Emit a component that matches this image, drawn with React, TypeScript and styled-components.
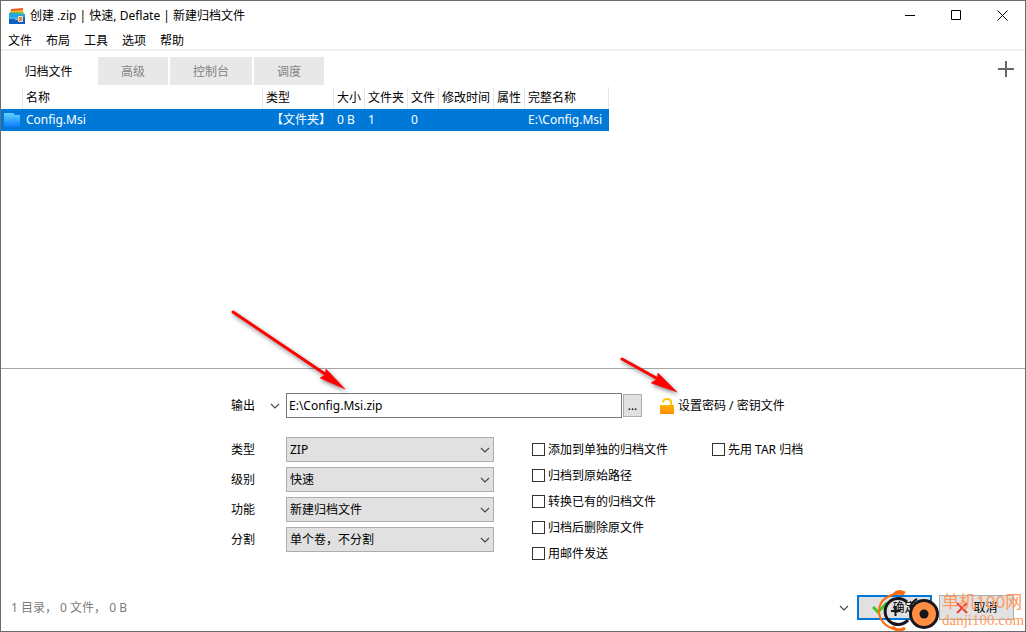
import React from 'react';
import styled, { createGlobalStyle } from 'styled-components';

const GlobalStyle = createGlobalStyle`
  * { box-sizing: border-box; }
  body { margin: 0; background: #fff; }
  body, button, input, select {
    font-family: "Noto Sans", "Noto Sans CJK SC", sans-serif;
    font-size: 12px;
    line-height: 18px;
    color: #000;
  }
`;

const Window = styled.div`
  position: relative;
  display: flex;
  flex-direction: column;
  min-height: 100vh;
  border: 1px solid #6b6b6b;
  background: #fff;
  overflow: hidden;
`;

const TitleBar = styled.header`
  display: flex;
  align-items: center;
  height: 29px;
  padding-left: 8px;
  gap: 5px;
`;

const Title = styled.h1`
  flex: 1;
  margin: 0;
  font-size: 12px;
  font-weight: 400;
`;

const Captions = styled.div`
  display: flex;
`;

const Caption = styled.button`
  display: flex;
  align-items: center;
  justify-content: center;
  width: 46px;
  height: 29px;
  padding: 0;
  border: 0;
  background: none;
`;

const MenuBar = styled.nav`
  display: flex;
  height: 21px;
  padding: 2px 7px 0;
  gap: 14px;
  border-bottom: 2px solid #f0f0f0;
`;

const MenuItem = styled.button`
  padding: 0;
  border: 0;
  background: none;
`;

const TabBar = styled.div`
  display: flex;
  align-items: flex-start;
  gap: 2px;
  padding: 6px 7px 2px 0;
`;

const Tab = styled.button<{ $width: number; $active?: boolean }>`
  width: ${p => p.$width}px;
  height: 28px;
  padding: 2px 0 0;
  border: 0;
  background: ${p => (p.$active ? '#fff' : '#e8e8e8')};
  color: ${p => (p.$active ? '#000' : '#838383')};
`;

const AddButton = styled.button`
  display: flex;
  margin-left: auto;
  padding: 4px;
  border: 0;
  background: none;
`;

const FileArea = styled.main`
  flex: 1;
  border-bottom: 1px solid #a5a5a5;
`;

const FileTable = styled.table`
  width: 608px;
  table-layout: fixed;
  border-collapse: separate;
  border-spacing: 0;
`;

const HeadCell = styled.th`
  height: 22px;
  padding: 0 0 0 3px;
  border-right: 1px solid #e5e5e5;
  font-weight: 400;
  text-align: left;
  white-space: nowrap;
`;

const Cell = styled.td<{ $align?: 'right' }>`
  height: 22px;
  padding: 0 3px;
  background: #0078d7;
  color: #fff;
  text-align: ${p => p.$align ?? 'left'};
  white-space: nowrap;

  svg { display: block; }
`;

const Form = styled.form`
  position: relative;
  display: flex;
  flex-direction: column;
  gap: 19px;
  padding: 24px 8px 29px 230px;
`;

const OutputRow = styled.div`
  display: flex;
  align-items: center;
  height: 25px;
`;

const OutputLabel = styled.label`
  width: 35px;
`;

const ArrowButton = styled.button`
  display: flex;
  align-items: center;
  justify-content: center;
  width: 18px;
  height: 24px;
  padding: 0;
  border: 0;
  background: none;
`;

const PathInput = styled.input`
  width: 336px;
  height: 25px;
  margin-left: 2px;
  padding: 0 2px;
  border: 1px solid #7a7a7a;
  background: #fff;
`;

const BrowseButton = styled.button`
  width: 19px;
  height: 23px;
  margin-left: 1px;
  padding: 0;
  border: 1px solid #adadad;
  background: #e1e1e1;
`;

const PasswordLink = styled.button`
  display: flex;
  align-items: center;
  gap: 4px;
  margin-left: 18px;
  padding: 0;
  border: 0;
  background: none;
`;

const Options = styled.div`
  display: flex;
  align-items: flex-start;
`;

const Fields = styled.div`
  display: grid;
  grid-template-columns: 55px 208px;
  align-items: center;
  row-gap: 5px;
  margin-right: 38px;
`;

const SelectBox = styled.div`
  display: grid;
  align-items: center;

  > * { grid-area: 1 / 1; }
  svg { justify-self: end; margin-right: 4px; pointer-events: none; }
`;

const Select = styled.select`
  appearance: none;
  width: 100%;
  height: 25px;
  padding: 0 20px 0 3px;
  border: 1px solid #adadad;
  border-radius: 0;
  background: #e1e1e1;
`;

const Checks = styled.div`
  display: flex;
  flex-direction: column;
  gap: 1px;
  width: 180px;
`;

const CheckLabel = styled.label`
  display: flex;
  align-items: center;
  gap: 3px;
  height: 25px;
  white-space: nowrap;
`;

const CheckInput = styled.input`
  appearance: none;
  width: 13px;
  height: 13px;
  margin: 0;
  border: 1px solid #333;
  background: #fff;

  &:checked { background: #0078d7; }
`;

const Footer = styled.footer`
  display: flex;
  align-items: center;
  padding: 0 11px 11px 10px;
`;

const Status = styled.span`
  flex: 1;
  color: #7b7b7b;
`;

const ActionButton = styled.button<{ $primary?: boolean }>`
  display: flex;
  align-items: center;
  justify-content: center;
  gap: 4px;
  width: 75px;
  height: 25px;
  margin-left: ${p => (p.$primary ? 4 : 7)}px;
  padding: 0;
  border: ${p => (p.$primary ? '2px solid #0078d7' : '1px solid #adadad')};
  background: #e1e1e1;
`;

const Arrows = styled.svg`
  position: absolute;
  left: 220px;
  top: -70px;
  pointer-events: none;
  filter: drop-shadow(1px 2px 2px rgba(0, 0, 0, 0.5));
`;

const Watermark = styled.div`
  position: absolute;
  right: 0;
  bottom: -1px;
  display: flex;
  align-items: center;
  color: #ff9a5c;
  pointer-events: none;
`;

const SiteText = styled.div`
  display: flex;
  flex-direction: column;
  width: 83px;
  margin-left: 2px;
  white-space: nowrap;
`;

const SiteName = styled.span`
  font-size: 17px;
  line-height: 18px;
`;

const SiteDomain = styled.span`
  font-family: "Liberation Serif", serif;
  font-size: 15px;
  line-height: 18px;
`;

const Chevron = () => (
  <svg width="10" height="6" viewBox="0 0 10 6" fill="none" stroke="#444" strokeWidth="1.1">
    <path d="M1 1l4 4 4-4" />
  </svg>
);

const AppIcon = () => (
  <svg width="16" height="16" viewBox="0 0 16 16">
    <path d="M2 1l12-1v5H2z" fill="#ee5a24" />
    <path d="M1 3l13-1v4H1z" fill="#f8b52a" />
    <path d="M1 4h13l1 1v3H1z" fill="#7cc24a" />
    <path d="M0 5h9l1 1h6v4H0z" fill="#27a6df" />
    <path d="M0 9h16v7H0z" fill="#0d5fc4" />
    <path d="M0 9h9v2H0z" fill="#35b5ed" />
    <path d="M9.500 8.500h4v5h-4z" fill="#c98a58" stroke="#ffe0bd" />
    <path d="M6 11h5v1H6z" fill="#f0a866" />
  </svg>
);

const FolderIcon = () => (
  <svg width="16" height="14" viewBox="0 0 16 14">
    <defs>
      <linearGradient id="folder" x1="0" y1="0" x2="0" y2="1">
        <stop offset="0" stopColor="#62d3ff" />
        <stop offset="1" stopColor="#0a7cff" />
      </linearGradient>
    </defs>
    <path d="M0 0h9l2 2h5v12H0z" fill="url(#folder)" />
  </svg>
);

const LockIcon = () => (
  <svg width="14" height="16" viewBox="0 0 14 16">
    <defs>
      <linearGradient id="lock" x1="0" y1="0" x2="0" y2="1">
        <stop offset="0" stopColor="#ffb400" />
        <stop offset="1" stopColor="#ff8c00" />
      </linearGradient>
    </defs>
    <path d="M3 4.500C3 2 4.800 1 7 1s4.200 1.200 4.200 4v2" fill="none" stroke="#ffc400" strokeWidth="1.800" />
    <path d="M0 7h14v9H0z" fill="url(#lock)" />
  </svg>
);

const SiteLogo = () => (
  <svg width="62" height="42" viewBox="0 0 62 42" fill="none">
    <path d="M26 4C12 2 1 10 1 21c0 9 7 17 17 18" stroke="#ff6a0c" strokeWidth="2" />
    <path d="M16 4c3-3 7-3 11-1M14 37c5 4 9 4 13 1" stroke="#ff6a0c" strokeWidth="3" />
    <path d="M29 12A13 13 0 1 0 30 30" stroke="#16161c" strokeWidth="3" />
    <path d="M13 21h9M17.500 16v10" stroke="#16161c" strokeWidth="2" />
    <circle cx="46" cy="24" r="13.500" fill="#ff8d42" stroke="#16161c" strokeWidth="3" />
    <circle cx="46" cy="24" r="4.500" fill="#16161c" />
    <path d="M32 18c1-4 3-7 7-9" stroke="#16161c" strokeWidth="2" />
  </svg>
);

const columns: [string, number][] = [
  ['', 22], ['名称', 240], ['类型', 71], ['大小', 31], ['文件夹', 43],
  ['文件', 31], ['修改时间', 55], ['属性', 31], ['完整名称', 84],
];

const fields = [
  { id: 'type', label: '类型', value: 'ZIP' },
  { id: 'level', label: '级别', value: '快速' },
  { id: 'function', label: '功能', value: '新建归档文件' },
  { id: 'split', label: '分割', value: '单个卷，不分割' },
];

const checks = ['添加到单独的归档文件', '归档到原始路径', '转换已有的归档文件', '归档后删除原文件', '用邮件发送'];

const Check = ({ label }: { label: string }) => (
  <CheckLabel>
    <CheckInput type="checkbox" />
    {label}
  </CheckLabel>
);

export default function App() {
  return (
    <>
      <GlobalStyle />
      <Window>
        <TitleBar>
          <AppIcon />
          <Title>创建 .zip | 快速, Deflate | 新建归档文件</Title>
          <Captions>
            <Caption aria-label="最小化">
              <svg width="11" height="11" stroke="#000"><path d="M0 5.500h10" /></svg>
            </Caption>
            <Caption aria-label="最大化">
              <svg width="11" height="11" fill="none" stroke="#000"><path d="M.5.5h9v9h-9z" /></svg>
            </Caption>
            <Caption aria-label="关闭">
              <svg width="11" height="11" stroke="#000"><path d="M.5.5l10 10M10.500.5l-10 10" /></svg>
            </Caption>
          </Captions>
        </TitleBar>
        <MenuBar>
          {['文件', '布局', '工具', '选项', '帮助'].map(m => <MenuItem key={m}>{m}</MenuItem>)}
        </MenuBar>
        <TabBar>
          <Tab $width={95} $active>归档文件</Tab>
          <Tab $width={70}>高级</Tab>
          <Tab $width={82}>控制台</Tab>
          <Tab $width={70}>调度</Tab>
          <AddButton aria-label="添加">
            <svg width="16" height="16" stroke="#666" strokeWidth="2"><path d="M0 8h16M8 0v16" /></svg>
          </AddButton>
        </TabBar>
        <FileArea>
          <FileTable>
            <colgroup>
              {columns.map(([name, width]) => <col key={name} width={width} />)}
            </colgroup>
            <thead>
              <tr>{columns.map(([name]) => <HeadCell key={name}>{name}</HeadCell>)}</tr>
            </thead>
            <tbody>
              <tr>
                <Cell><FolderIcon /></Cell>
                <Cell>Config.Msi</Cell>
                <Cell $align="right">【文件夹】</Cell>
                <Cell>0 B</Cell>
                <Cell>1</Cell>
                <Cell>0</Cell>
                <Cell />
                <Cell />
                <Cell>E:\Config.Msi</Cell>
              </tr>
            </tbody>
          </FileTable>
        </FileArea>
        <Form onSubmit={e => e.preventDefault()}>
          <OutputRow>
            <OutputLabel htmlFor="output">输出</OutputLabel>
            <ArrowButton type="button" aria-label="输出选项"><Chevron /></ArrowButton>
            <PathInput id="output" type="text" defaultValue="E:\Config.Msi.zip" />
            <BrowseButton type="button">...</BrowseButton>
            <PasswordLink type="button">
              <LockIcon />
              设置密码 / 密钥文件
            </PasswordLink>
          </OutputRow>
          <Options>
            <Fields>
              {fields.map(f => (
                <React.Fragment key={f.id}>
                  <label htmlFor={f.id}>{f.label}</label>
                  <SelectBox>
                    <Select id={f.id}><option>{f.value}</option></Select>
                    <Chevron />
                  </SelectBox>
                </React.Fragment>
              ))}
            </Fields>
            <Checks>{checks.map(c => <Check key={c} label={c} />)}</Checks>
            <Check label="先用 TAR 归档" />
          </Options>
          <Arrows width="480" height="110" viewBox="0 0 480 110">
            <path d="M12 13l92 62M401 60l36 20" stroke="#f00" strokeWidth="3" strokeLinecap="round" />
            <path d="M124 90L105 70l-1 6-5 3zM456 93L437 74l-1 6-6 4z" fill="#f00" stroke="#f00" strokeWidth=".5" />
          </Arrows>
        </Form>
        <Footer>
          <Status>1 目录， 0 文件， 0 B</Status>
          <ArrowButton aria-label="更多"><Chevron /></ArrowButton>
          <ActionButton $primary>
            <svg width="16" height="14" fill="none" stroke="#3fc928" strokeWidth="3"><path d="M1 6l5 5 9-9" /></svg>
            确定
          </ActionButton>
          <ActionButton>
            <svg width="14" height="12" stroke="#f43b2e" strokeWidth="2"><path d="M2 1l10 10M12 1L2 11" /></svg>
            取消
          </ActionButton>
        </Footer>
        <Watermark>
          <SiteLogo />
          <SiteText>
            <SiteName>单机100网</SiteName>
            <SiteDomain>danji100.com</SiteDomain>
          </SiteText>
        </Watermark>
      </Window>
    </>
  );
}
